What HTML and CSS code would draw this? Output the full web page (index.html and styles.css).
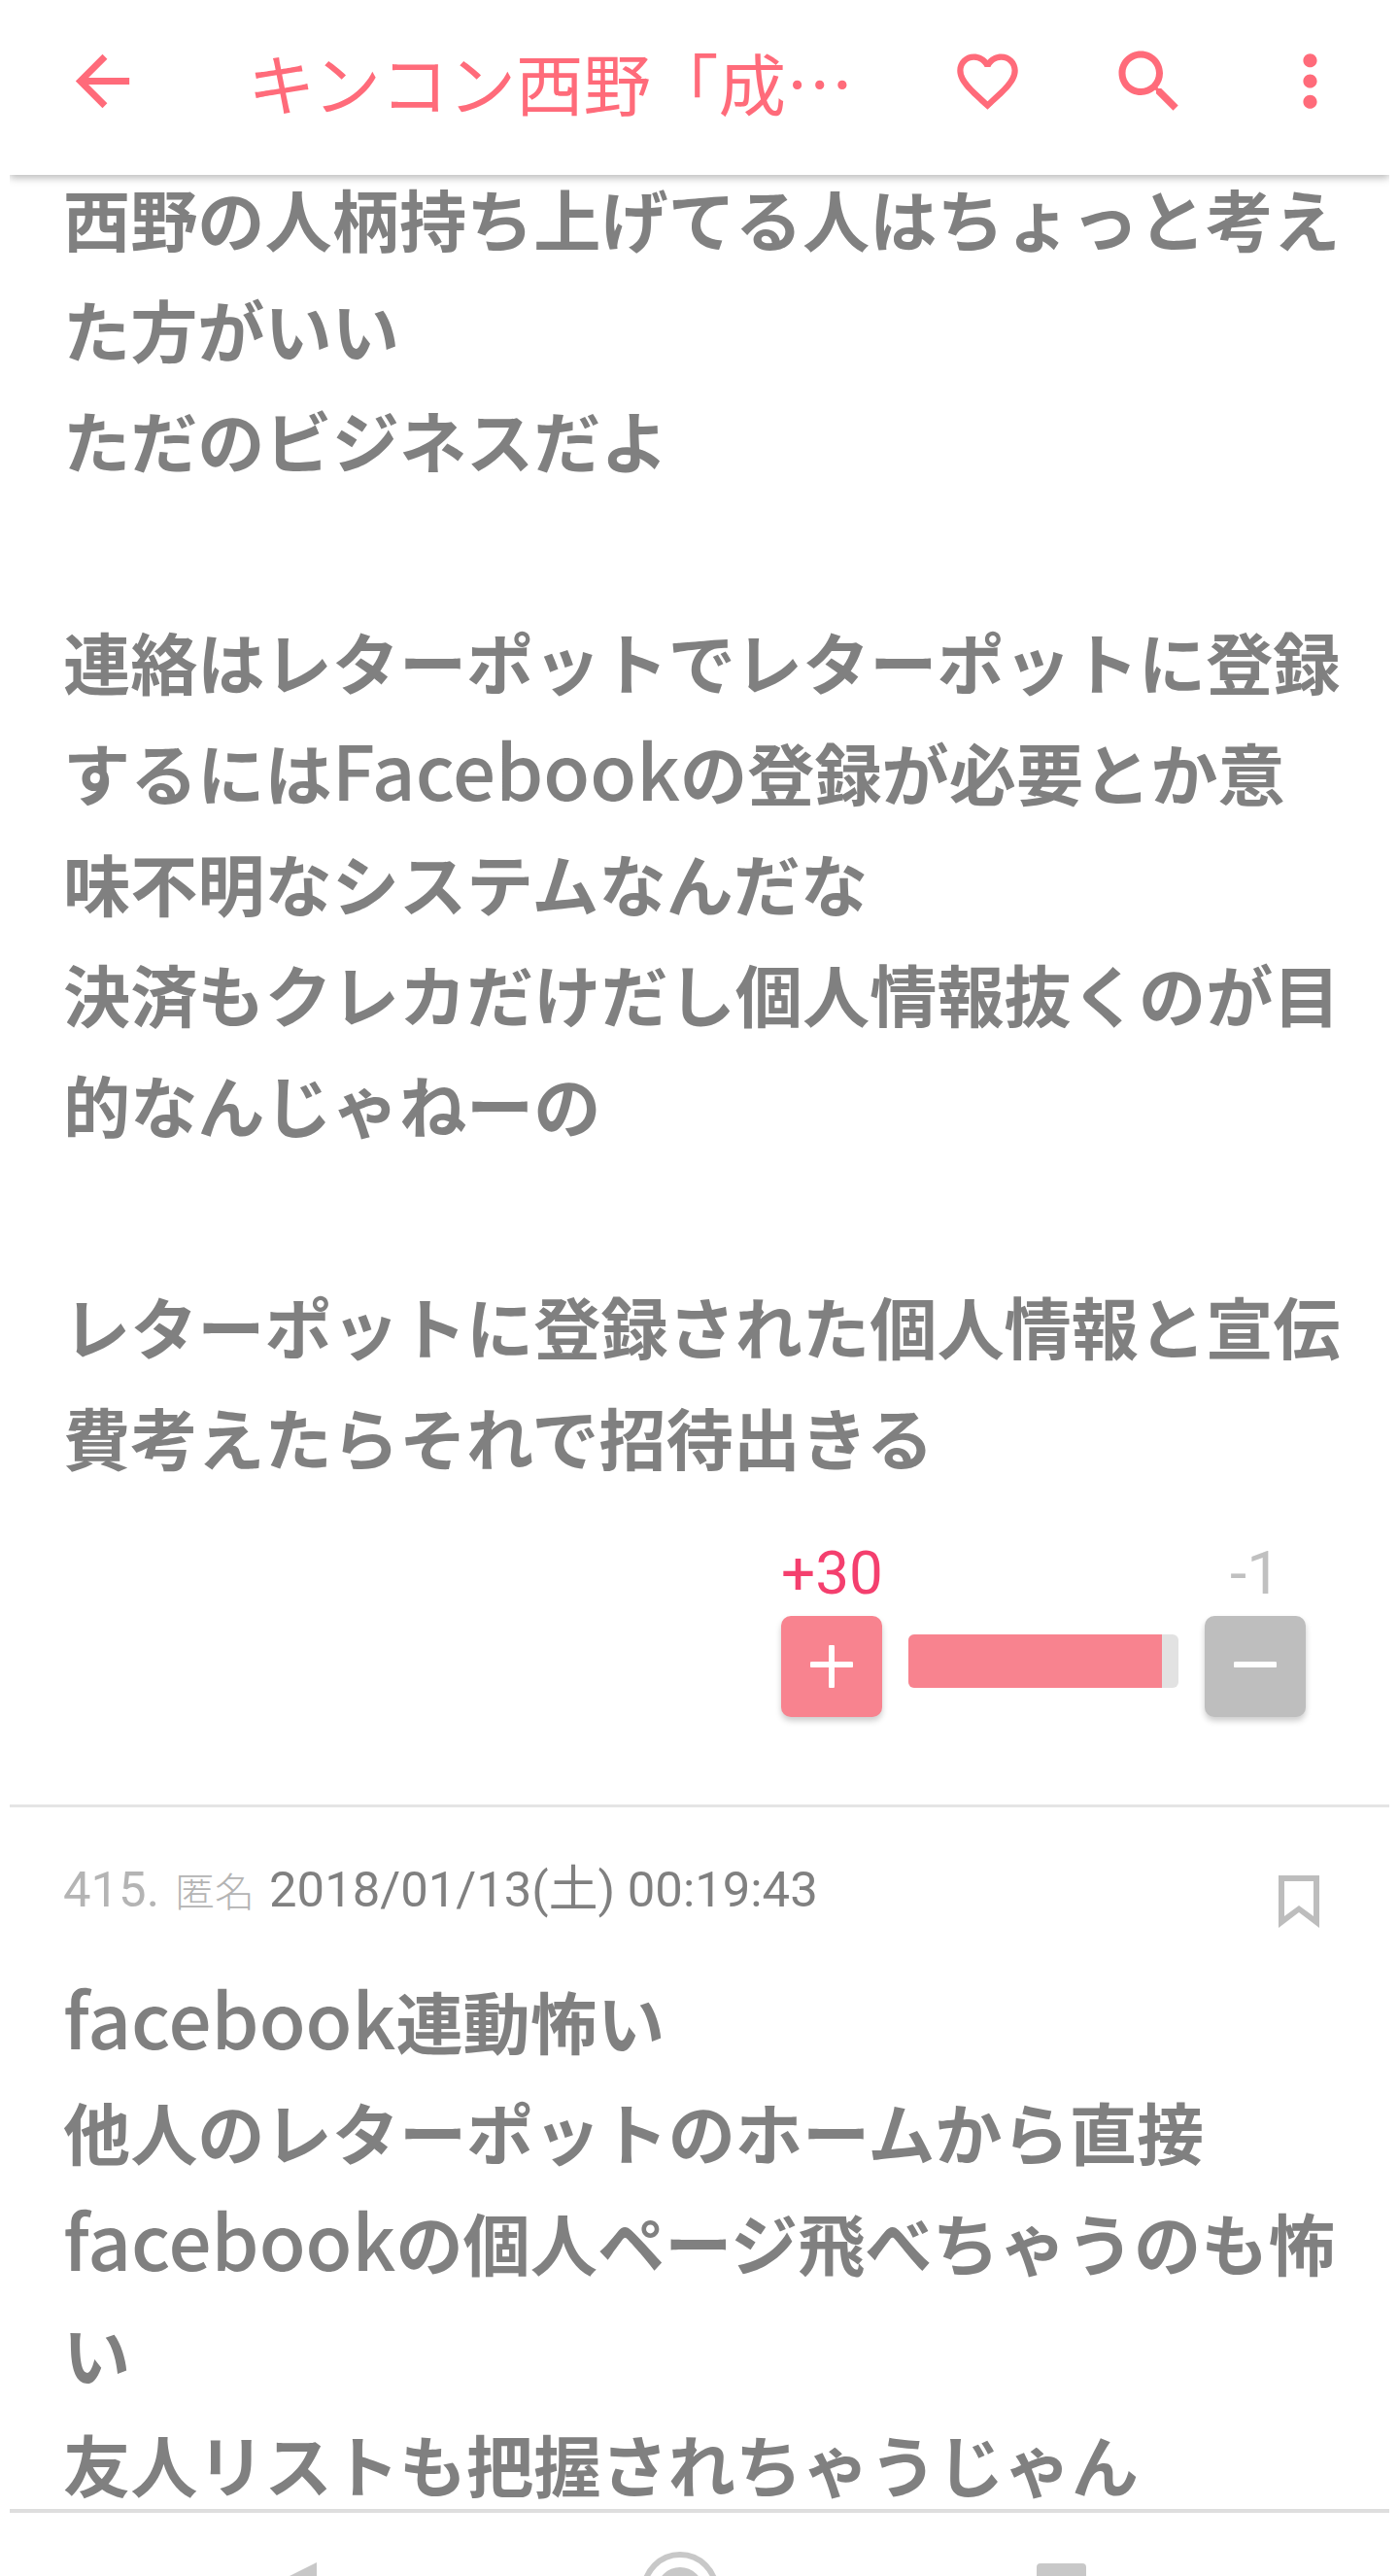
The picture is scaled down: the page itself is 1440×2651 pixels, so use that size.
FILE: index.html
```html
<!DOCTYPE html>
<html lang="ja">
<head>
    <meta charset="UTF-8">
    <meta name="viewport" content="width=device-width, initial-scale=1.0">
    <title>キンコン西野</title>
    <link rel="stylesheet" href="styles.css">
</head>
<body>
    <div class="pantalla">
        <header class="cabecera">
            <svg class="ico-atras" viewBox="0 0 24 24"><path d="M20 11H7.83l5.59-5.59L12 4l-8 8 8 8 1.41-1.41L7.83 13H20v-2z"/></svg>
            <div class="titulo">キンコン西野「成…</div>
            <svg class="ico-corazon" viewBox="0 0 24 24"><path d="M16.5 3c-1.74 0-3.41.81-4.5 2.09C10.91 3.81 9.24 3 7.5 3 4.42 3 2 5.42 2 8.5c0 3.78 3.4 6.86 8.55 11.54L12 21.35l1.45-1.32C18.6 15.36 22 12.28 22 8.5 22 5.42 19.58 3 16.5 3zm-4.4 15.55l-.1.1-.1-.1C7.14 14.24 4 11.39 4 8.5 4 6.5 5.5 5 7.5 5c1.54 0 3.04.99 3.57 2.36h1.87C13.46 5.99 14.96 5 16.5 5c2 0 3.5 1.5 3.5 3.5 0 2.89-3.14 5.74-7.9 10.05z"/></svg>
            <svg class="ico-buscar" viewBox="0 0 24 24"><path d="M15.5 14h-.79l-.28-.27C15.41 12.59 16 11.11 16 9.5 16 5.91 13.09 3 9.5 3S3 5.91 3 9.5 5.91 16 9.5 16c1.61 0 3.09-.59 4.23-1.57l.27.28v.79l5 4.99L20.49 19l-4.99-5zm-6 0C7.01 14 5 11.99 5 9.5S7.01 5 9.5 5 14 7.01 14 9.5 11.99 14 9.5 14z"/></svg>
            <svg class="ico-menu" viewBox="0 0 24 24"><path d="M12 8c1.1 0 2-.9 2-2s-.9-2-2-2-2 .9-2 2 .9 2 2 2zm0 2c-1.1 0-2 .9-2 2s.9 2 2 2 2-.9 2-2-.9-2-2-2zm0 6c-1.1 0-2 .9-2 2s.9 2 2 2 2-.9 2-2-.9-2-2-2z"/></svg>
        </header>

        <main class="contenido">
            <section class="comentario">
                <p class="texto texto-inicio">西野の人柄持ち上げてる人はちょっと考えた方がいい<br>ただのビジネスだよ<br><br>連絡はレターポットでレターポットに登録するには<span class="latino">Facebook</span>の登録が必要とか意味不明なシステムなんだな<br>決済もクレカだけだし個人情報抜くのが目的なんじゃねーの<br><br>レターポットに登録された個人情報と宣伝費考えたらそれで招待出きる</p>
                <div class="votos">
                    <span class="num-mas">+30</span>
                    <span></span>
                    <span class="num-menos">-1</span>
                    <button class="boton boton-mas"><svg viewBox="0 0 44 44"><path d="M22 2v40M2 20h40"/></svg></button>
                    <div class="barra"><div class="barra-llena"></div></div>
                    <button class="boton boton-menos"><svg viewBox="0 0 44 44"><path d="M2 20h40"/></svg></button>
                </div>
            </section>

            <section class="comentario">
                <div class="meta">
                    <span class="numero">415.</span>
                    <span class="autor">匿名</span>
                    <span class="fecha">2018/01/13(土) 00:19:43</span>
                    <svg class="ico-marca" viewBox="0 0 42 54"><path fill-rule="evenodd" d="M0 0h42v54L21 38 0 54zM6 6v36l15-11 15 11V6z"/></svg>
                </div>
                <p class="texto"><span class="latino">facebook</span>連動怖い<br>他人のレターポットのホームから直接<br><span class="latino">facebook</span>の個人ページ飛べちゃうのも怖い<br>友人リストも把握されちゃうじゃん</p>
            </section>
        </main>

        <nav class="navegacion">
            <svg class="nav-atras" viewBox="0 0 60 64"><path d="M56 0v64H-72z"/></svg>
            <svg class="nav-casa" viewBox="0 0 100 64"><circle cx="50" cy="44" r="37" fill="none" stroke="#c8c8c8" stroke-width="6"/><circle cx="50" cy="44" r="24"/></svg>
            <div class="nav-cuadro"></div>
        </nav>
    </div>
</body>
</html>
```

FILE: styles.css
```css
*{
    box-sizing: border-box;
}
body{
    margin: 0;
    background-color: #fff;
    font-family: "Noto Sans CJK JP", "Noto Sans", sans-serif;
}
.pantalla{
    height: 2651px;
    padding: 0 10px;
    display: flex;
    flex-direction: column;
    overflow: hidden;
}
.cabecera{
    height: 180px;
    flex-shrink: 0;
    display: flex;
    align-items: center;
    padding: 0 39px 13px 54px;
    background-color: #fff;
    box-shadow: 0 3px 8px rgba(0, 0, 0, .28);
    clip-path: inset(0 0 -20px 0);
    position: relative;
    z-index: 2;
}
.cabecera svg{
    fill: #ff6b7a;
    flex-shrink: 0;
}
.ico-atras{
    width: 83px;
    height: 83px;
}
.titulo{
    flex: 1;
    margin-left: 108px;
    color: #ff6b7a;
    font-size: 69.5px;
    line-height: 1;
    white-space: nowrap;
}
.ico-corazon{
    width: 75px;
    height: 75px;
}
.ico-buscar{
    width: 84px;
    height: 84px;
    margin-left: 87px;
}
.ico-menu{
    width: 85px;
    height: 85px;
    margin-left: 81px;
}
.contenido{
    flex: 1;
    overflow: hidden;
}
.comentario{
    padding: 0 55px;
}
.comentario + .comentario{
    border-top: 3px solid #e5e5e5;
    padding-top: 43px;
}
.texto{
    margin: 0;
    width: 1318px;
    color: #808080;
    font-size: 69.2px;
    font-weight: 700;
    line-height: 114px;
}
.texto-inicio{
    margin-top: -13px;
}
.latino{
    font-size: 78px;
    font-weight: 500;
    line-height: 1;
}
.votos{
    width: 540px;
    margin: 48px 31px 90px auto;
    display: grid;
    grid-template-columns: 104px 1fr 104px;
    column-gap: 27px;
    align-items: center;
    font-family: Roboto, sans-serif;
    font-size: 62px;
    line-height: 72px;
    text-align: center;
}
.num-mas{
    color: #f43f6e;
    margin-bottom: 8px;
}
.num-menos{
    color: #c0c0c0;
    margin-bottom: 8px;
}
.boton{
    width: 104px;
    height: 104px;
    padding: 0;
    border: none;
    border-radius: 10px;
    display: flex;
    align-items: center;
    justify-content: center;
    box-shadow: 0 4px 6px rgba(0, 0, 0, .2);
}
.boton svg{
    width: 44px;
    height: 44px;
    fill: none;
    stroke: #fff;
    stroke-width: 6;
    stroke-linecap: round;
}
.boton-mas{
    background-color: #f8838f;
}
.boton-menos{
    background-color: #bebebe;
}
.barra{
    height: 55px;
    margin-bottom: 11px;
    border-radius: 6px;
    background-color: #e2e2e2;
    overflow: hidden;
}
.barra-llena{
    width: 261px;
    height: 100%;
    background-color: #f8838f;
}
.meta{
    display: flex;
    align-items: baseline;
    height: 60px;
    font-family: Roboto, "Noto Sans CJK JP", sans-serif;
    font-size: 50.8px;
    white-space: nowrap;
    margin-bottom: 59px;
}
.numero{
    color: #b4b4b4;
}
.autor{
    color: #b4b4b4;
    font-size: 41px;
    margin-left: 16px;
    font-family: "Noto Sans CJK JP", sans-serif;
    font-weight: 300;
}
.fecha{
    color: #808080;
    margin-left: 15px;
}
.ico-marca{
    align-self: flex-start;
    width: 42px;
    height: 54px;
    fill: #bdbdbd;
    margin-left: auto;
    margin-right: 17px;
    margin-top: 27px;
}
.navegacion{
    height: 69px;
    flex-shrink: 0;
    display: flex;
    align-items: flex-start;
    padding-left: 260px;
    border-top: 4px solid #dedede;
    background-color: #fff;
    position: relative;
    z-index: 2;
}
.navegacion svg{
    fill: #c8c8c8;
    flex-shrink: 0;
}
.nav-atras{
    width: 60px;
    height: 64px;
    margin-top: 51px;
}
.nav-casa{
    width: 100px;
    height: 64px;
    margin-top: 36px;
    margin-left: 320px;
}
.nav-cuadro{
    width: 51px;
    height: 60px;
    margin-top: 52px;
    margin-left: 317px;
    border-radius: 4px 4px 0 0;
    background-color: #c8c8c8;
}
```
